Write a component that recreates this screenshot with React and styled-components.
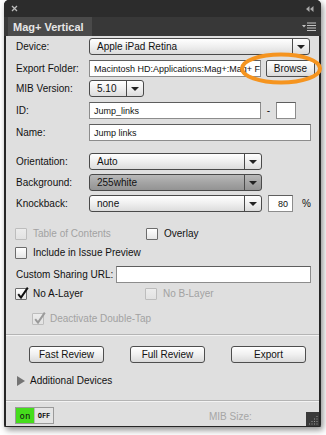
import React from 'react';
import styled, { createGlobalStyle } from 'styled-components';

const Global = createGlobalStyle`
  html, body { margin: 0; padding: 0; background: #fff; }
  body { font-family: "Liberation Sans", Arial, sans-serif; font-size: 10px; color: #111; }
`;

const Page = styled.div`
  position: relative;
  width: 326px;
  height: 435px;
  overflow: hidden;
  background: #fff;
`;

const Window = styled.div`
  margin-left: 4px;
  width: 317px;
  height: 427px;
  display: flex;
  flex-direction: column;
  border-radius: 5px 5px 2px 2px;
  box-shadow: 2px 3px 6px rgba(0, 0, 0, 0.45);
  overflow: hidden;
  background: #2a2a2a;
`;

const TopBar = styled.div`
  height: 17px;
  flex-shrink: 0;
  background: #2c2c2c;
  display: flex;
  align-items: center;
  justify-content: space-between;
  padding: 0 7px 0 7px;
`;

const TabRow = styled.div`
  height: 19px;
  flex-shrink: 0;
  background: #383838;
  display: flex;
  align-items: stretch;
  padding: 0 5px 0 4px;
`;

const Tab = styled.div`
  width: 84px;
  box-sizing: border-box;
  padding-left: 5px;
  background: #4a4a4a;
  color: #e6e6e6;
  font-size: 11px;
  font-weight: bold;
  display: flex;
  align-items: center;
`;

const MenuIcon = styled.div`
  margin-left: auto;
  display: flex;
  align-items: center;
`;

const Body = styled.div`
  flex: 1;
  display: flex;
  flex-direction: column;
  background: #dfdfdf;
  border-left: 2px solid #262626;
  border-right: 2px solid #262626;
  border-bottom: 1px solid #262626;
`;

const Row = styled.div`
  display: flex;
  align-items: center;
  height: ${p => p.$h || 17}px;
  margin-top: ${p => p.$mt || 0}px;
  padding-left: ${p => (p.$pl === undefined ? 10 : p.$pl)}px;
  flex-shrink: 0;
`;

const Label = styled.div`
  width: ${p => (p.$w ? p.$w + 'px' : '73px')};
  flex-shrink: 0;
  color: #111;
  white-space: nowrap;
`;

const Dropdown = styled.div`
  width: ${p => p.$w}px;
  height: 17px;
  box-sizing: border-box;
  border: 1px solid #4a4a4a;
  border-radius: 3px;
  background: ${p =>
    p.$dark
      ? 'linear-gradient(#b9b9b9, #a4a4a4 50%, #939393)'
      : 'linear-gradient(#ffffff, #efefef 50%, #dcdcdc)'};
  display: flex;
  align-items: stretch;
  flex-shrink: 0;
`;

const DropText = styled.div`
  flex: 1;
  padding-left: 7px;
  display: flex;
  align-items: center;
  color: #111;
  white-space: nowrap;
  overflow: hidden;
`;

const DropArrow = styled.div`
  width: 16px;
  border-left: 1px solid #4a4a4a;
  display: flex;
  align-items: center;
  justify-content: center;
  &::after {
    content: '';
    border-left: 4px solid transparent;
    border-right: 4px solid transparent;
    border-top: 4px solid #222;
    margin-top: 1px;
  }
`;

const Field = styled.div`
  width: ${p => p.$w}px;
  height: ${p => p.$h || 17}px;
  box-sizing: border-box;
  flex-shrink: 0;
  background: #fff;
  border: 1px solid #8c8c8c;
  border-top-color: #5e5e5e;
  padding: 0 ${p => (p.$right ? 4 : 0)}px 0 ${p => (p.$right ? 0 : 4)}px;
  display: flex;
  align-items: center;
  justify-content: ${p => (p.$right ? 'flex-end' : 'flex-start')};
  white-space: nowrap;
  overflow: hidden;
  font-size: 9px;
  color: #111;
  margin-left: ${p => p.$ml || 0}px;
`;

const Button = styled.div`
  width: ${p => p.$w}px;
  height: 17px;
  box-sizing: border-box;
  flex-shrink: 0;
  border: 1px solid #4e4e4e;
  border-radius: ${p => p.$r || 3}px;
  background: linear-gradient(#ffffff, #f0f0f0 50%, #dadada);
  display: flex;
  align-items: center;
  justify-content: center;
  color: #111;
  margin-left: ${p => p.$ml || 0}px;
`;

const Dash = styled.div`
  width: 15px;
  text-align: center;
  flex-shrink: 0;
`;

const Percent = styled.div`
  margin-left: 9px;
`;

const CheckCell = styled.div`
  display: flex;
  align-items: center;
  width: ${p => (p.$w ? p.$w + 'px' : 'auto')};
  flex-shrink: 0;
  color: ${p => (p.$disabled ? '#a2a2a2' : '#111')};
`;

const Box = styled.div`
  position: relative;
  width: 12px;
  height: 12px;
  box-sizing: border-box;
  flex-shrink: 0;
  border: 1px solid ${p => (p.$disabled ? '#bdbdbd' : '#6c6c6c')};
  border-radius: 1px;
  background: ${p =>
    p.$disabled ? 'linear-gradient(#ececec, #e2e2e2)' : 'linear-gradient(#ffffff, #e6e6e6)'};
  margin-right: 6px;
`;

const CheckMark = styled.svg`
  position: absolute;
  left: 0;
  top: -3px;
  overflow: visible;
`;

const Separator = styled.div`
  height: 0;
  flex-shrink: 0;
  margin-top: ${p => p.$mt}px;
  border-top: 1px solid #b4b4b4;
  border-bottom: 1px solid #f3f3f3;
`;

const ButtonRow = styled.div`
  display: flex;
  gap: 26px;
  padding-left: 23px;
  margin-top: ${p => p.$mt}px;
  flex-shrink: 0;
`;

const Disclosure = styled.div`
  width: 0;
  height: 0;
  border-top: 5.5px solid transparent;
  border-bottom: 5.5px solid transparent;
  border-left: 8px solid #747474;
  margin-right: 5px;
`;

const BottomBar = styled.div`
  flex: 1;
  display: flex;
  align-items: flex-start;
  padding: 5px 0 0 9px;
`;

const Toggle = styled.div`
  display: flex;
  height: 17px;
  box-sizing: border-box;
  border: 1px solid #9a9a9a;
  font-family: "DejaVu Sans Mono", "Liberation Mono", monospace;
`;

const ToggleHalf = styled.div`
  width: 18px;
  display: flex;
  align-items: center;
  justify-content: center;
  background: ${p => (p.$on ? '#45dd1c' : '#e4e4e4')};
  color: #111;
  font-size: ${p => (p.$on ? 9 : 7)}px;
  font-weight: ${p => (p.$on ? 'normal' : 'bold')};
  border-left: ${p => (p.$on ? 'none' : '1px solid #b8b8b8')};
`;

const MibSize = styled.div`
  margin-left: 155px;
  margin-top: 4px;
  color: #a6a6a6;
`;

const Grip = styled.div`
  margin-left: auto;
  align-self: flex-end;
  width: 13px;
  height: 14px;
  background: #3a3a3a;
  display: flex;
  align-items: flex-end;
  justify-content: flex-end;
`;

const Ring = styled.svg`
  position: absolute;
  left: 238px;
  top: 51px;
  pointer-events: none;
`;

function Select({ w, dark, children }) {
  return (
    <Dropdown $w={w} $dark={dark}>
      <DropText>{children}</DropText>
      <DropArrow />
    </Dropdown>
  );
}

function Check({ checked, disabled, w, children }) {
  return (
    <CheckCell $w={w} $disabled={disabled}>
      <Box $disabled={disabled}>
        {checked && (
          <CheckMark width="14" height="14" viewBox="0 0 14 14">
            <path
              d="M2.2 8.2 L5 11.6 L11.8 1.6"
              fill="none"
              stroke={disabled ? '#9a9a9a' : '#111'}
              strokeWidth="2"
              strokeLinejoin="miter"
            />
          </CheckMark>
        )}
      </Box>
      {children}
    </CheckCell>
  );
}

export default function App() {
  return (
    <Page>
      <Global />
      <Window>
        <TopBar>
          <svg width="7" height="7" viewBox="0 0 7 7">
            <path d="M1 1 L6 6 M6 1 L1 6" stroke="#bdbdbd" strokeWidth="1.3" />
          </svg>
          <svg width="8" height="6" viewBox="0 0 8 6">
            <path d="M0 3 L3.5 0 L3.5 6 Z M4 3 L7.5 0 L7.5 6 Z" fill="#a8a8a8" />
          </svg>
        </TopBar>
        <TabRow>
          <Tab>Mag+ Vertical</Tab>
          <MenuIcon>
            <svg width="14" height="10" viewBox="0 0 14 10">
              <path d="M0 3 L4 3 L2 5.5 Z" fill="#c4c4c4" />
              <path d="M5 1 H14 M5 3.5 H14 M5 6 H14 M5 8.5 H14" stroke="#c4c4c4" strokeWidth="1" />
            </svg>
          </MenuIcon>
        </TabRow>
        <Body>
          <Row $mt={2}>
            <Label>Device:</Label>
            <Select w={221}>Apple iPad Retina</Select>
          </Row>
          <Row $mt={5}>
            <Label>Export Folder:</Label>
            <Field $w={172}>Macintosh HD:Applications:Mag+:Mag+ F</Field>
            <Button $w={49} $r={2} $ml={5}>Browse</Button>
          </Row>
          <Row $mt={3}>
            <Label>MIB Version:</Label>
            <Select w={55}>5.10</Select>
          </Row>
          <Row $mt={5}>
            <Label>ID:</Label>
            <Field $w={172}>Jump_links</Field>
            <Dash>-</Dash>
            <Field $w={20} />
          </Row>
          <Row $mt={5}>
            <Label>Name:</Label>
            <Field $w={222}>Jump links</Field>
          </Row>
          <Row $mt={12}>
            <Label>Orientation:</Label>
            <Select w={173}>Auto</Select>
          </Row>
          <Row $mt={4}>
            <Label>Background:</Label>
            <Select w={173} dark>255white</Select>
          </Row>
          <Row $mt={4}>
            <Label>Knockback:</Label>
            <Select w={173}>none</Select>
            <Field $w={25} $ml={6} $right>80</Field>
            <Percent>%</Percent>
          </Row>
          <Row $mt={15} $h={13} $pl={9}>
            <Check disabled w={131}>Table of Contents</Check>
            <Check>Overlay</Check>
          </Row>
          <Row $mt={6} $h={13} $pl={9}>
            <Check>Include in Issue Preview</Check>
          </Row>
          <Row $mt={7}>
            <Label $w={100}>Custom Sharing URL:</Label>
            <Field $w={195}></Field>
          </Row>
          <Row $mt={4} $h={13} $pl={9}>
            <Check checked w={130}>No A-Layer</Check>
            <Check disabled>No B-Layer</Check>
          </Row>
          <Row $mt={12} $h={13} $pl={26}>
            <Check checked disabled>Deactivate Double-Tap</Check>
          </Row>
          <Separator $mt={9} />
          <ButtonRow $mt={10}>
            <Button $w={75}>Fast Review</Button>
            <Button $w={75}>Full Review</Button>
            <Button $w={75}>Export</Button>
          </ButtonRow>
          <Row $mt={11} $h={13} $pl={11}>
            <Disclosure />
            <span>Additional Devices</span>
          </Row>
          <Separator $mt={13} />
          <BottomBar>
            <Toggle>
              <ToggleHalf $on>on</ToggleHalf>
              <ToggleHalf>OFF</ToggleHalf>
            </Toggle>
            <MibSize>MIB Size:</MibSize>
            <Grip>
              <svg width="11" height="11" viewBox="0 0 11 11">
                {[0, 1, 2, 3].flatMap(r =>
                  [0, 1, 2, 3]
                    .filter(c => c + r >= 3)
                    .map(c => (
                      <rect key={r + '-' + c} x={1 + c * 2.5} y={1 + r * 2.5} width="1" height="1" fill="#9a9a9a" />
                    ))
                )}
              </svg>
            </Grip>
          </BottomBar>
        </Body>
      </Window>
      <Ring width="88" height="36" viewBox="0 0 88 36">
        <ellipse cx="43" cy="17.5" rx="39" ry="14" fill="none" stroke="#f5941f" strokeWidth="4" />
      </Ring>
    </Page>
  );
}
